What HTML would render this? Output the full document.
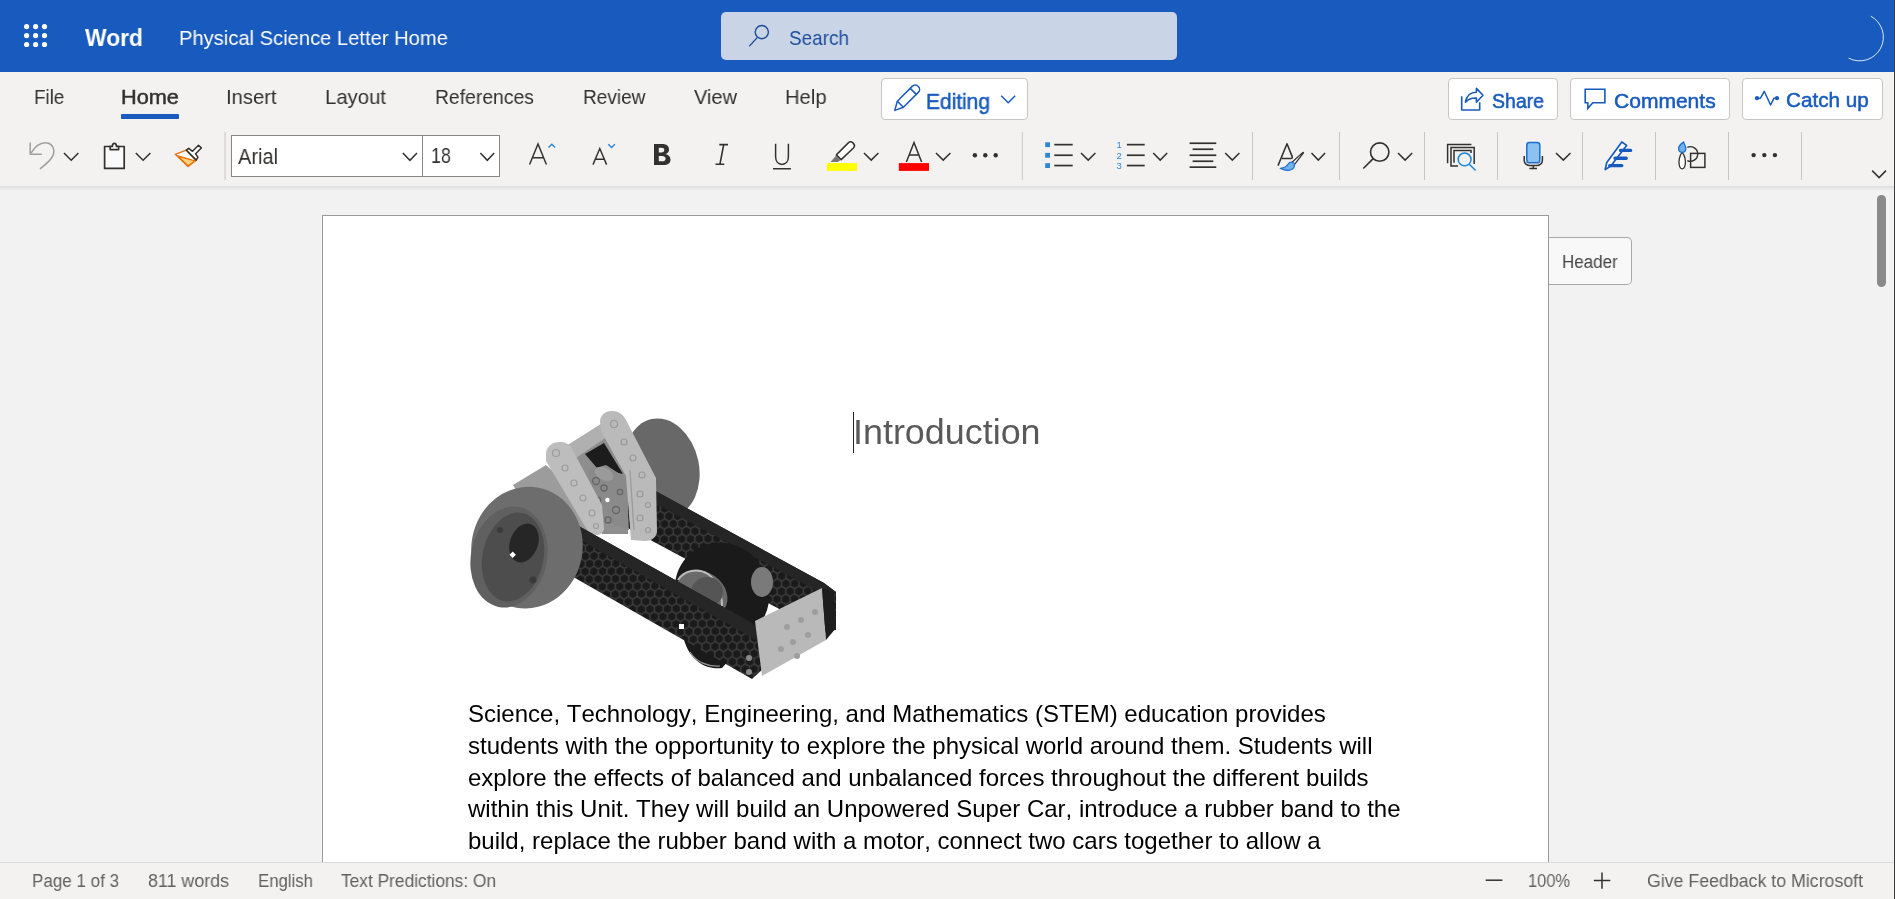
<!DOCTYPE html>
<html><head><meta charset="utf-8">
<style>
html,body{margin:0;padding:0;width:1895px;height:899px;overflow:hidden;background:#f2f2f2;font-family:"Liberation Sans",sans-serif;}
.a{position:absolute;white-space:pre;line-height:1;will-change:transform;}
.r{position:absolute;}
</style></head>
<body>
<div class="r" style="left:0;top:0;width:1895px;height:72px;background:#185abd;"></div>
<div class="r" style="left:721px;top:12px;width:456px;height:48px;background:#c9d4e7;border-radius:5px;"></div>
<div class="r" style="left:0;top:72px;width:1895px;height:114px;background:#f3f2f1;"></div>
<div class="r" style="left:0;top:186px;width:1895px;height:5px;background:linear-gradient(#dedede,#f2f2f2);"></div>
<div class="r" style="left:322px;top:215px;width:1225px;height:700px;background:#fff;border:1px solid #9a9a9a;"></div>
<div class="r" style="left:121px;top:114px;width:58px;height:5px;background:#185abd;border-radius:1px;"></div>
<div class="r" style="left:881px;top:78px;width:145px;height:40px;background:#fff;border:1px solid #c8c6c4;border-radius:4px;"></div>
<div class="r" style="left:1448px;top:78px;width:108px;height:40px;background:#fff;border:1px solid #c8c6c4;border-radius:4px;"></div>
<div class="r" style="left:1570px;top:78px;width:158px;height:40px;background:#fff;border:1px solid #c8c6c4;border-radius:4px;"></div>
<div class="r" style="left:1742px;top:78px;width:139px;height:40px;background:#fff;border:1px solid #c8c6c4;border-radius:4px;"></div>
<div class="r" style="left:231px;top:135px;width:267px;height:40px;background:#fff;border:1px solid #8a8886;"></div>
<div class="r" style="left:422px;top:136px;width:1px;height:40px;background:#8a8886;"></div>
<div class="r" style="left:1549px;top:237px;width:82px;height:46px;background:#f8f8f8;border:1px solid #a8a8a8;border-left:none;border-radius:0 5px 5px 0;"></div>
<div class="r" style="left:1877px;top:195px;width:9px;height:92px;background:#8a8a8a;border-radius:5px;"></div>
<div class="a" style="left:853.0px;top:415.21px;font-size:35.9px;color:#595959;font-weight:400;font-kerning:none;">Introduction</div>
<div class="r" style="left:853px;top:412px;width:1px;height:41px;background:#222;"></div><div class="a" style="left:468px;top:702.38px;font-size:24px;color:#000;font-weight:400;font-kerning:none;">Science, Technology, Engineering, and Mathematics (STEM) education provides</div>
<div class="a" style="left:468px;top:734.08px;font-size:24px;color:#000;font-weight:400;font-kerning:none;">students with the opportunity to explore the physical world around them. Students will</div>
<div class="a" style="left:468px;top:765.78px;font-size:24px;color:#000;font-weight:400;font-kerning:none;">explore the effects of balanced and unbalanced forces throughout the different builds</div>
<div class="a" style="left:468px;top:797.48px;font-size:24px;color:#000;font-weight:400;font-kerning:none;">within this Unit. They will build an Unpowered Super Car, introduce a rubber band to the</div>
<div class="a" style="left:468px;top:829.18px;font-size:24px;color:#000;font-weight:400;font-kerning:none;">build, replace the rubber band with a motor, connect two cars together to allow a</div>

<svg class="r" style="left:0;top:0" width="1895" height="899">
<defs>
<pattern id="hex" width="15" height="9" patternUnits="userSpaceOnUse" patternTransform="rotate(30)">
<rect width="15" height="9" fill="#1a1a1a"/>
<path d="M0,0 L2.5,4.5 L0,9 M2.5,4.5 H7.5 L10,0 M7.5,4.5 L10,9 M10,0 H15 M10,9 H15" fill="none" stroke="#3e3e3e" stroke-width="1.4"/>
</pattern>
</defs>
<!-- back wheel -->
<ellipse cx="662" cy="468" rx="37" ry="50" transform="rotate(-12 662 468)" fill="#686868"/>
<!-- back rail -->
<polygon points="628,476 824,583 836,592 836,630 822,632 628,528" fill="url(#hex)"/>
<polygon points="628,476 824,583 836,592 830,598 630,490" fill="#252525"/>
<!-- black middle wheel -->
<ellipse cx="722" cy="592" rx="47" ry="50" transform="rotate(-25 722 592)" fill="#1a1a1a"/>
<ellipse cx="702" cy="594" rx="27" ry="22" transform="rotate(35 702 594)" fill="#6a6a6a"/>
<path d="M678,580 C684,570 698,568 708,574 C716,580 722,592 722,606" fill="none" stroke="#bdbdbd" stroke-width="2"/>
<ellipse cx="707" cy="592" rx="16" ry="15" fill="#555"/>
<ellipse cx="762" cy="582" rx="11" ry="15" fill="#7a7a7a"/>
<path d="M684,640 C690,660 705,670 722,668 L738,650 Z" fill="#1a1a1a"/>
<path d="M690,652 C696,662 708,667 720,666" fill="none" stroke="#9a9a9a" stroke-width="1.2"/>
<!-- left gray piece and mount -->
<polygon points="513,485 546,465 590,505 600,532 560,530 525,505" fill="#9c9c9c"/>
<!-- filler between brackets -->
<polygon points="566,450 606,424 628,480 628,534 602,534 566,470" fill="#8e8e8e"/>
<!-- crossbar -->
<polygon points="566,446 604,422 614,432 576,458" fill="#b0b0b0"/>
<!-- dark opening -->
<polygon points="585,454 604,443 623,474 597,468" fill="#1c1c1c"/>
<!-- mount -->
<polygon points="588,470 606,465 626,478 629,530 606,521 591,492" fill="#8a8a8a"/>
<g fill="none" stroke="#666" stroke-width="1.3">
<circle cx="596" cy="481" r="3.5"/><circle cx="604" cy="488" r="3"/><circle cx="616" cy="510" r="3.5"/><circle cx="608" cy="520" r="3"/><circle cx="620" cy="492" r="2.6"/><circle cx="598" cy="500" r="2.6"/>
</g>
<ellipse cx="604" cy="474" rx="10" ry="6" transform="rotate(25 604 474)" fill="#9a9a9a"/>
<circle cx="607.4" cy="500" r="2.2" fill="#fff"/>
<!-- bracket B -->
<path d="M600,421 C601,414 606,411 612,411 C618,411 623,414 626,420 L656,478 L657,532 C656,538 651,541 645,541 L631,540 L626,476 L601,431 Z" fill="#bababa"/>
<g fill="none" stroke="#999" stroke-width="1.2">
<circle cx="614" cy="424" r="3.5"/><circle cx="624" cy="442" r="3"/><circle cx="633" cy="458" r="3"/><circle cx="642" cy="475" r="3"/>
<circle cx="640" cy="494" r="3"/><circle cx="648" cy="505" r="2.5"/><circle cx="640" cy="518" r="3"/><circle cx="648" cy="530" r="2.5"/>
<path d="M630,470 L634,530"/>
</g>
<!-- bracket A -->
<path d="M546,452 C548,445 553,442 560,442 C565,442 569,444 571,447 L602,505 L604,529 C603,533 600,535 596,535 L589,533 L546,461 Z" fill="#bdbdbd"/>
<g fill="none" stroke="#9c9c9c" stroke-width="1.2">
<circle cx="556" cy="453" r="3.5"/><circle cx="565" cy="468" r="3"/><circle cx="574" cy="483" r="3"/><circle cx="583" cy="498" r="3"/><circle cx="592" cy="513" r="3"/><circle cx="596" cy="526" r="2.5"/>
</g>
<!-- front rail -->
<polygon points="568,520 752,623 764,636 764,668 752,679 568,574" fill="url(#hex)"/>
<polygon points="568,520 752,623 764,636 756,640 568,533" fill="#262626"/>
<circle cx="749" cy="658" r="3" fill="#8a8a8a"/><circle cx="749" cy="672" r="3" fill="#8a8a8a"/>
<rect x="679" y="624" width="5" height="5" fill="#fff"/>
<!-- front block -->
<polygon points="755,621 822,588 826,640 762,676" fill="#b9b9b9"/>
<polygon points="822,588 834,592 836,628 826,640" fill="#1e1e1e"/>
<g fill="#9e9e9e">
<circle cx="787" cy="627" r="3"/><circle cx="801" cy="620" r="3"/><circle cx="793" cy="642" r="3"/><circle cx="808" cy="635" r="3"/>
<circle cx="781" cy="649" r="3"/><circle cx="797" cy="656" r="3"/><circle cx="815" cy="612" r="3"/>
</g>
<!-- left wheel -->
<ellipse cx="527" cy="547.6" rx="55.6" ry="61" transform="rotate(10 527 547.6)" fill="#6d6d6d"/>
<ellipse cx="509" cy="557" rx="38" ry="51" transform="rotate(12 509 557)" fill="#606060"/>
<ellipse cx="513" cy="557" rx="30.5" ry="45" transform="rotate(12 513 557)" fill="#4d4d4d"/>
<ellipse cx="524" cy="543" rx="14" ry="20" transform="rotate(20 524 543)" fill="#262626"/>
<circle cx="500" cy="530" r="3" fill="#3a3a3a"/><circle cx="533" cy="580" r="3.5" fill="#3a3a3a"/>
<rect x="510.5" y="552.5" width="4.5" height="4.5" transform="rotate(45 512.7 554.7)" fill="#fff"/>
</svg>

<div class="r" style="left:0;top:862px;width:1895px;height:37px;background:#f3f2f1;border-top:1px solid #dadada;"></div>
<div class="r" style="left:1894px;top:0;width:1px;height:899px;background:#3c3c3c;"></div>
<div class="a" style="left:85.00px;top:26.37px;font-size:24.72px;color:#fff;font-weight:700;transform:scaleX(0.9248);transform-origin:0 0;">Word</div>
<div class="a" style="left:179.40px;top:28.27px;font-size:20.95px;color:#fff;font-weight:400;transform:scaleX(0.9626);transform-origin:0 0;">Physical Science Letter Home</div>
<div class="a" style="left:789.40px;top:27.50px;font-size:20.67px;color:#1d4c9b;font-weight:400;transform:scaleX(0.9163);transform-origin:0 0;">Search</div>
<div class="a" style="left:33.70px;top:86.57px;font-size:20.95px;color:#323130;font-weight:400;transform:scaleX(0.8978);transform-origin:0 0;">File</div>
<div class="a" style="left:121.00px;top:86.57px;font-size:20.95px;color:#323130;font-weight:400;transform:scaleX(1.0377);transform-origin:0 0;-webkit-text-stroke:0.5px #323130;">Home</div>
<div class="a" style="left:226.00px;top:86.57px;font-size:20.95px;color:#323130;font-weight:400;transform:scaleX(0.9657);transform-origin:0 0;">Insert</div>
<div class="a" style="left:325.00px;top:86.57px;font-size:20.95px;color:#323130;font-weight:400;transform:scaleX(0.9699);transform-origin:0 0;">Layout</div>
<div class="a" style="left:435.00px;top:86.57px;font-size:20.95px;color:#323130;font-weight:400;transform:scaleX(0.9241);transform-origin:0 0;">References</div>
<div class="a" style="left:583.20px;top:86.57px;font-size:20.95px;color:#323130;font-weight:400;transform:scaleX(0.9090);transform-origin:0 0;">Review</div>
<div class="a" style="left:694.00px;top:86.57px;font-size:20.95px;color:#323130;font-weight:400;transform:scaleX(0.9538);transform-origin:0 0;">View</div>
<div class="a" style="left:785.20px;top:86.57px;font-size:20.95px;color:#323130;font-weight:400;transform:scaleX(0.9653);transform-origin:0 0;">Help</div>
<div class="a" style="left:926.00px;top:90.96px;font-size:21.79px;color:#185abd;font-weight:400;transform:scaleX(0.9606);transform-origin:0 0;-webkit-text-stroke:0.5px #185abd;">Editing</div>
<div class="a" style="left:1492.00px;top:91.55px;font-size:19.55px;color:#185abd;font-weight:400;transform:scaleX(0.9968);transform-origin:0 0;-webkit-text-stroke:0.5px #185abd;">Share</div>
<div class="a" style="left:1614.00px;top:91.55px;font-size:19.55px;color:#185abd;font-weight:400;transform:scaleX(1.0768);transform-origin:0 0;-webkit-text-stroke:0.5px #185abd;">Comments</div>
<div class="a" style="left:1786.00px;top:91.33px;font-size:19.69px;color:#185abd;font-weight:400;transform:scaleX(1.0506);transform-origin:0 0;-webkit-text-stroke:0.5px #185abd;">Catch up</div>
<div class="a" style="left:238.20px;top:145.77px;font-size:21.65px;color:#323130;font-weight:400;transform:scaleX(0.9234);transform-origin:0 0;">Arial</div>
<div class="a" style="left:430.50px;top:146.01px;font-size:21.37px;color:#323130;font-weight:400;transform:scaleX(0.8333);transform-origin:0 0;">18</div>
<div class="a" style="left:1562.20px;top:252.79px;font-size:18.44px;color:#444;font-weight:400;transform:scaleX(0.9228);transform-origin:0 0;">Header</div>
<div class="a" style="left:32.40px;top:872.28px;font-size:18.58px;color:#616161;font-weight:400;transform:scaleX(0.9157);transform-origin:0 0;">Page 1 of 3</div>
<div class="a" style="left:147.90px;top:872.28px;font-size:18.58px;color:#616161;font-weight:400;transform:scaleX(0.9605);transform-origin:0 0;">811 words</div>
<div class="a" style="left:257.50px;top:872.28px;font-size:18.58px;color:#616161;font-weight:400;transform:scaleX(0.9027);transform-origin:0 0;">English</div>
<div class="a" style="left:341.20px;top:872.28px;font-size:18.58px;color:#616161;font-weight:400;transform:scaleX(0.9325);transform-origin:0 0;">Text Predictions: On</div>
<div class="a" style="left:1528.00px;top:872.28px;font-size:18.58px;color:#616161;font-weight:400;transform:scaleX(0.8839);transform-origin:0 0;">100%</div>
<div class="a" style="left:1646.90px;top:872.28px;font-size:18.58px;color:#616161;font-weight:400;transform:scaleX(0.9554);transform-origin:0 0;">Give Feedback to Microsoft</div>

<svg class="r" style="left:0;top:0" width="1895" height="899">
<g fill="#fff">
<circle cx="26.6" cy="26.6" r="2.6"/><circle cx="35.6" cy="26.6" r="2.6"/><circle cx="44.5" cy="26.6" r="2.6"/>
<circle cx="26.6" cy="35.6" r="2.6"/><circle cx="35.6" cy="35.6" r="2.6"/><circle cx="44.5" cy="35.6" r="2.6"/>
<circle cx="26.6" cy="44.5" r="2.6"/><circle cx="35.6" cy="44.5" r="2.6"/><circle cx="44.5" cy="44.5" r="2.6"/>
</g>
<!-- search -->
<g fill="none" stroke="#1c4a97" stroke-width="1.4">
<circle cx="761.8" cy="32.1" r="6.6"/>
<path d="M749.2,46.4 L757.2,37.6"/>
</g>
<!-- loader arc -->
<path d="M1870.8,16.2 A23.5,23.5 0 0 1 1848.6,58.1" fill="none" stroke="#fff" stroke-width="1" opacity="0.85"/>
<!-- editing pencil -->
<g fill="none" stroke="#185abd" stroke-width="1.5" stroke-linejoin="round">
<path d="M894.8,110.4 L897.3,101.3 L912.2,86.4 C914,84.6 916.6,84.6 918.3,86.4 C920,88.1 920,90.7 918.3,92.4 L903.4,107.3 Z"/>
<path d="M897.3,101.3 L903.4,107.3 M910.2,88.4 L916.3,94.4"/>
<path d="M1001.2,95.8 L1008.2,102.8 L1015.2,95.8"/>
</g>
<!-- share -->
<g fill="none" stroke="#185abd" stroke-width="1.6" stroke-linejoin="round">
<path d="M1461.7,96.3 V110 H1479.7 V102.2"/>
<path d="M1465.5,102.2 C1466.5,96 1470.5,92.2 1476.4,92.2 V88.4 L1483,95.3 L1476.4,102.2 V98 C1471.5,97.8 1468,99.5 1465.5,102.2 Z"/>
</g>
<!-- comments -->
<path d="M1585.2,89.2 H1604.9 V102.7 H1592.8 L1587.8,108.3 V102.7 H1585.2 Z" fill="none" stroke="#185abd" stroke-width="1.6" stroke-linejoin="miter"/>
<!-- catch up -->
<g stroke="#185abd" stroke-width="1.5" fill="none" stroke-linejoin="round">
<path d="M1757,98.2 H1760.5 L1764.2,91.3 L1770.6,105 L1774,98.2 H1777"/>
</g>
<circle cx="1757" cy="98.2" r="2.1" fill="#185abd"/><circle cx="1777" cy="98.2" r="2.1" fill="#185abd"/>
<!-- dividers -->
<g fill="#c8c6c4">
<rect x="224.5" y="132" width="1" height="48"/><rect x="1021.8" y="132" width="1" height="48"/>
<rect x="1252" y="132" width="1" height="48"/><rect x="1339" y="132" width="1" height="48"/>
<rect x="1424" y="132" width="1" height="48"/><rect x="1497" y="132" width="1" height="48"/>
<rect x="1582" y="132" width="1" height="48"/><rect x="1655" y="132" width="1" height="48"/>
<rect x="1728" y="132" width="1" height="48"/><rect x="1801" y="132" width="1" height="48"/>
</g>
<!-- chevrons -->
<g fill="none" stroke="#323130" stroke-width="1.5">
<path d="M64,153 L71.2,160.3 L78.4,153"/>
<path d="M135.8,153 L143.1,160.3 L150.4,153"/>
<path d="M402.8,153 L409.9,160.3 L417,153"/>
<path d="M480.4,153 L487.3,160.3 L494.2,153"/>
<path d="M864,153 L871.2,160.1 L878.4,153"/>
<path d="M936,153 L943.2,160.1 L950.4,153"/>
<path d="M1081,153 L1088.2,160.1 L1095.4,153"/>
<path d="M1153.2,153 L1160.2,160.1 L1167.2,153"/>
<path d="M1225.2,153 L1232.3,160.1 L1239.4,153"/>
<path d="M1311.5,153 L1318.3,160.1 L1325.1,153"/>
<path d="M1398,153 L1405.1,160.1 L1412.2,153"/>
<path d="M1556,153 L1563.3,160.1 L1570.5,153"/>
<path d="M1872.2,170.6 L1879.1,177.6 L1886,170.6"/>
</g>
<!-- undo -->
<g fill="none" stroke="#a19f9d" stroke-width="1.5" stroke-linejoin="round">
<path d="M30.2,142.6 V154.2 H41.8"/>
<path d="M31,153.2 C36,145 42,142 47.5,143 C52.5,144 54.5,149 53.7,153.5 C53,158 47,163.5 40,168.8"/>
</g>
<!-- clipboard -->
<g fill="#fafafa" stroke="#323130" stroke-width="1.7" stroke-linejoin="round">
<path d="M110.3,146.5 H104.6 V168.4 H124.2 V146.5 H118.6"/>
<path d="M110.2,149.6 V146.3 H112.4 C112.4,144.6 113.2,143.3 114.4,143.3 C115.6,143.3 116.4,144.6 116.4,146.3 H118.6 V149.6 Z"/>
</g>
<!-- format painter -->
<path d="M175.3,154.3 L186.3,150.1 L196.1,160.3 L188.1,166.4 Z" fill="#fff" stroke="#e8700a" stroke-width="1.4" stroke-linejoin="round"/>
<path d="M177.8,156 L195,160.8 L188.1,166 Z" fill="#f8d37f" stroke="#e8700a" stroke-width="1.3" stroke-linejoin="round"/>
<path d="M186.3,150.1 L188.7,148.3 L192.5,151.3 L198.5,145.3 L201.3,147.9 L195.6,153.8 L197.9,157.2 L196.2,160.1 Z" fill="#fff" stroke="#323130" stroke-width="1.5" stroke-linejoin="round"/>
<!-- grow / shrink -->
<g fill="none" stroke="#323130" stroke-width="1.45">
<path d="M529.6,164.6 L538,144 L546.4,164.6 M532.3,157.8 H543.7"/>
<path d="M593,164.6 L599.8,148.5 L606.6,164.6 M595.2,159.3 H604.4"/>
</g>
<g fill="none" stroke="#2b88d8" stroke-width="1.45">
<path d="M548.5,147.6 L551.8,144.3 L555.1,147.6"/>
<path d="M608.3,144.2 L611.6,147.5 L614.9,144.2"/>
</g>
<!-- bold -->
<path fill="#323130" fill-rule="evenodd" d="M654,144 H662.3 C666.6,144 669,146.1 669,149.4 C669,151.8 667.6,153.4 665.4,154 C668.4,154.5 670.5,156.7 670.5,159.7 C670.5,163 667.8,165 663.4,165 H654 Z M658.8,147.7 V152.6 H661.4 C663.3,152.6 664.3,151.7 664.3,150.1 C664.3,148.5 663.3,147.7 661.4,147.7 Z M658.8,156.1 V161.3 H662 C664.3,161.3 665.6,160.4 665.6,158.7 C665.6,157 664.3,156.1 662,156.1 Z"/>
<!-- italic -->
<path d="M719.3,144.6 H728 M715.5,164.3 H724.3 M723.7,144.6 L719.9,164.3" fill="none" stroke="#323130" stroke-width="1.6"/>
<!-- underline -->
<path d="M775.6,143.8 V156.6 C775.6,161.6 778.3,164.4 782,164.4 C785.7,164.4 788.4,161.6 788.4,156.6 V143.8 M773,168.8 H790.9" fill="none" stroke="#323130" stroke-width="1.5"/>
<!-- highlighter -->
<path d="M836.3,154.9 L848.3,142.9 C849.6,141.6 851.6,141.6 852.9,142.9 L853.4,143.4 C854.7,144.7 854.7,146.7 853.4,148 L841.2,159.6 Z" fill="#fff" stroke="#323130" stroke-width="1.5" stroke-linejoin="round"/>
<path d="M836.2,155.6 L840.6,160 L837.8,161.9 L830.5,161.9 Z" fill="#767676"/>
<rect x="826.9" y="163.1" width="30.1" height="7.8" fill="#ffff00"/>
<!-- font color -->
<path d="M906.4,162.1 L914,142.6 L921.6,162.1 M909.4,155 H918.6" fill="none" stroke="#323130" stroke-width="1.5"/>
<rect x="898.8" y="163.1" width="30.2" height="7.8" fill="#ff0000"/>
<!-- more dots -->
<g fill="#323130">
<circle cx="974.9" cy="155.3" r="2.2"/><circle cx="985.3" cy="155.3" r="2.2"/><circle cx="995.7" cy="155.3" r="2.2"/>
<circle cx="1753.6" cy="155.1" r="2.2"/><circle cx="1764.3" cy="155.1" r="2.2"/><circle cx="1774.9" cy="155.1" r="2.2"/>
</g>
<!-- bullets -->
<g fill="#2b88d8">
<rect x="1045.2" y="142.3" width="4.8" height="4.8"/><rect x="1045.2" y="152.9" width="4.8" height="4.8"/><rect x="1045.2" y="163.2" width="4.8" height="4.8"/>
</g>
<g fill="#323130">
<rect x="1054.3" y="143.8" width="18.4" height="1.7"/><rect x="1054.3" y="154.4" width="18.4" height="1.7"/><rect x="1054.3" y="164.7" width="18.4" height="1.7"/>
<rect x="1126.9" y="143.8" width="17.8" height="1.7"/><rect x="1126.9" y="154.4" width="17.8" height="1.7"/><rect x="1126.9" y="164.7" width="17.8" height="1.7"/>
<rect x="1189.6" y="142.4" width="26.7" height="1.7"/><rect x="1192.6" y="148.4" width="20.7" height="1.7"/><rect x="1189.6" y="154.4" width="26.7" height="1.7"/><rect x="1192.6" y="160.4" width="20.7" height="1.7"/><rect x="1189.6" y="166.3" width="26.7" height="1.7"/>
</g>
<g fill="#2b88d8" font-family="Liberation Sans" font-size="9.5">
<text x="1116.6" y="148.2">1</text><text x="1116.6" y="158.7">2</text><text x="1116.6" y="169.3">3</text>
</g>
<!-- styles -->
<path d="M1278,165.6 L1287,143.8 L1292.2,156.6 C1292.6,157.8 1292,158.4 1290.8,158.4 H1282" fill="none" stroke="#323130" stroke-width="1.55" stroke-linejoin="round"/>
<path d="M1292,162.3 L1302.6,152.6 C1303.3,152 1303.8,152.4 1303.3,153.2 L1294.6,164.4" fill="none" stroke="#323130" stroke-width="1.2"/>
<path d="M1280.2,168.3 C1284.5,168 1287.5,165.5 1288.6,163.5 C1289.7,161.8 1292.5,161.6 1293.8,163.2 C1295,164.8 1294.6,167.5 1292.6,169 C1289.8,171 1284.5,170.7 1280.2,168.3 Z" fill="#6fb3ec" stroke="#1a6fd0" stroke-width="1.2" stroke-linejoin="round"/>
<!-- find -->
<g fill="none" stroke="#323130" stroke-width="1.6">
<circle cx="1379.7" cy="152.1" r="9.2"/>
<path d="M1363.3,168.5 L1373.2,158.6"/>
</g>
<!-- reuse files -->
<g fill="none" stroke="#323130" stroke-width="1.5">
<path d="M1447.6,163.2 V144.6 H1471.4"/>
<path d="M1458,166 H1451 V147.6 H1474.2 V164"/>
<path d="M1454,162.8 V150.6 H1471 V153"/>
</g>
<g fill="none" stroke="#1a86d9" stroke-width="1.5">
<circle cx="1464.6" cy="159.4" r="6.4"/>
<path d="M1469.3,164.3 L1475.6,170.5"/>
</g>
<!-- mic -->
<rect x="1526.8" y="142.6" width="13" height="20.2" rx="2.6" fill="#8cc1f0" stroke="#1a6fd0" stroke-width="1.5"/>
<path d="M1524.2,156 V160.5 C1524.2,163.5 1527,165.6 1530,165.6 H1536.6 C1539.6,165.6 1542.4,163.5 1542.4,160.5 V156 M1533.3,165.6 V168.6 M1529.4,168.6 H1537" fill="none" stroke="#323130" stroke-width="1.5"/>
<!-- editor -->
<path d="M1605.2,169.6 L1606.8,162.4 L1621.8,142 L1626.6,145.4 L1610.8,166 Z" fill="#fff" stroke="#185abd" stroke-width="1.7" stroke-linejoin="round"/>
<g stroke="#185abd" stroke-width="3.4" stroke-linecap="round">
<path d="M1620.5,150.4 H1630.6 M1615,158.2 H1626.2 M1609.7,165.6 H1621.8"/>
</g>
<!-- designer -->
<path d="M1682.2,152.4 C1679.3,155.5 1678.6,161.5 1679.2,164.5 C1679.7,167.6 1680.8,168.8 1682.2,168.8 C1683.6,168.8 1684.7,167.6 1685.2,164.5 C1685.8,161.5 1685.1,155.5 1682.2,152.4 Z" fill="#fff" stroke="#323130" stroke-width="1.3"/>
<path d="M1683.6,142 C1681.5,143.5 1678.6,145.5 1678.6,148.6 C1678.6,150.8 1680.2,152.4 1682.2,152.4 C1684.2,152.4 1685.8,150.8 1685.8,148.6 C1685.8,146 1684.2,144.5 1683.6,142 Z" fill="#6fb3ec" stroke="#1a6fd0" stroke-width="1.3"/>
<path d="M1687.3,147.4 A7.3,7.3 0 1 1 1687.3,160.6" fill="none" stroke="#323130" stroke-width="1.4"/>
<rect x="1690.6" y="153.4" width="14.3" height="14" fill="none" stroke="#323130" stroke-width="1.5"/>
<!-- status minus plus -->
<g fill="none" stroke="#323130" stroke-width="1.5">
<path d="M1485.7,880.2 H1502.4"/>
<path d="M1593.8,880.6 H1610.3 M1602,872.6 V888.8"/>
</g>
</svg>

</body></html>
